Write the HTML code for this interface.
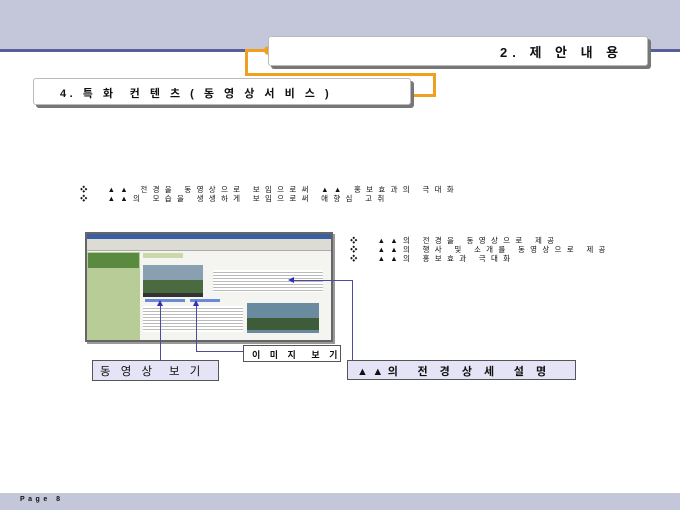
<!DOCTYPE html>
<html><head><meta charset="utf-8"><style>
*{margin:0;padding:0;box-sizing:border-box}
body{width:680px;height:510px;position:relative;background:#fff;overflow:hidden;font-family:"Liberation Sans","Noto Sans CJK KR",sans-serif;color:#111}
.a{position:absolute}
.bx{position:absolute;background:#fff;border:1px solid #bbb;border-radius:3px;box-shadow:3px 3px 0 #777}
.t{font-weight:bold;white-space:pre}
.sm{font-size:7.5px;letter-spacing:5.3px;white-space:pre;line-height:9px}
</style></head><body>
<div class="a" style="left:0;top:0;width:680px;height:50px;background:#c4c6da"></div>
<div class="a" style="left:0;top:49px;width:680px;height:3px;background:#5b5f99"></div>
<!-- orange connector -->
<div class="a" style="left:245px;top:49px;width:24px;height:3px;background:#f0a020"></div>
<div class="a" style="left:245px;top:49px;width:3px;height:27px;background:#f0a020"></div>
<div class="a" style="left:245px;top:73px;width:191px;height:3px;background:#f0a020"></div>
<div class="a" style="left:433px;top:73px;width:3px;height:24px;background:#f0a020"></div>
<div class="a" style="left:414px;top:94px;width:22px;height:3px;background:#f0a020"></div>
<div class="a" style="left:264px;top:46px;width:9px;height:9px;border-radius:50%;background:#f0a020"></div>
<div class="bx" style="left:268px;top:36px;width:380px;height:30px"></div>
<div class="a t" style="left:500px;top:42px;font-size:13px;letter-spacing:5px">2. 제 안 내 용</div>
<div class="bx" style="left:33px;top:78px;width:378px;height:27px"></div>
<div class="a t" style="left:60px;top:85px;font-size:11px;letter-spacing:3.5px">4. 특 화  컨 텐 츠 ( 동 영 상 서 비 스 )</div>

<div class="a sm" style="left:80px;top:185px">❖  ▲▲ 전경을 동영상으로 보임으로써 ▲▲ 홍보효과의 극대화
❖  ▲▲의 모습을 생생하게 보임으로써 애향심 고취</div>

<!-- screenshot -->
<div class="a" style="left:85px;top:232px;width:248px;height:110px;background:#f4f4f0;border:2px solid #666;box-shadow:2px 2px 0 #999"></div>
<div class="a" style="left:87px;top:234px;width:244px;height:5px;background:#3a5ea0"></div>
<div class="a" style="left:87px;top:239px;width:244px;height:12px;background:#dcdcd4;border-bottom:1px solid #aaa"></div>
<div class="a" style="left:87px;top:252px;width:53px;height:88px;background:#b8cc98"></div>
<div class="a" style="left:88px;top:253px;width:51px;height:15px;background:#5a8a40"></div>
<div class="a" style="left:143px;top:253px;width:40px;height:5px;background:#c8d8a8"></div>
<div class="a" style="left:143px;top:265px;width:60px;height:30px;background:#8aa0b0"></div>
<div class="a" style="left:143px;top:280px;width:60px;height:13px;background:#4a6a40"></div>
<div class="a" style="left:143px;top:293px;width:60px;height:4px;background:#333"></div>
<div class="a" style="left:213px;top:270px;width:110px;height:22px;background:repeating-linear-gradient(#fff 0 2px,#bbb 2px 3px)"></div>
<div class="a" style="left:145px;top:299px;width:40px;height:3px;background:#6a8ad8"></div>
<div class="a" style="left:190px;top:299px;width:30px;height:3px;background:#6a8ad8"></div>
<div class="a" style="left:143px;top:306px;width:100px;height:26px;background:repeating-linear-gradient(#fff 0 2px,#bbb 2px 3px)"></div>
<div class="a" style="left:247px;top:303px;width:72px;height:30px;background:#6a8aa0"></div>
<div class="a" style="left:247px;top:318px;width:72px;height:12px;background:#3e5c3a"></div>

<div class="a sm" style="left:350px;top:236px">❖  ▲▲의 전경을 동영상으로 제공
❖  ▲▲의 행사 및 소개를 동영상으로 제공
❖  ▲▲의 홍보효과 극대화</div>

<!-- pointer lines -->
<div class="a" style="left:292px;top:280px;width:61px;height:1px;background:#4a4aa0"></div>
<div class="a" style="left:352px;top:280px;width:1px;height:80px;background:#4a4aa0"></div>
<div class="a" style="left:288px;top:277px;border-right:6px solid #3030c0;border-top:3px solid transparent;border-bottom:3px solid transparent"></div>
<div class="a" style="left:160px;top:304px;width:1px;height:57px;background:#4a4aa0"></div>
<div class="a" style="left:157px;top:300px;border-bottom:6px solid #3030c0;border-left:3px solid transparent;border-right:3px solid transparent"></div>
<div class="a" style="left:196px;top:304px;width:1px;height:48px;background:#4a4aa0"></div>
<div class="a" style="left:196px;top:351px;width:48px;height:1px;background:#4a4aa0"></div>
<div class="a" style="left:193px;top:300px;border-bottom:6px solid #3030c0;border-left:3px solid transparent;border-right:3px solid transparent"></div>

<div class="a" style="left:243px;top:345px;width:98px;height:17px;background:#fff;border:1px solid #555"></div>
<div class="a t" style="left:252px;top:348px;font-size:9px;letter-spacing:3.5px">이 미 지  보 기</div>
<div class="a" style="left:92px;top:360px;width:127px;height:21px;background:#e4e4f6;border:1px solid #555"></div>
<div class="a" style="left:100px;top:363px;font-size:11.5px;letter-spacing:3.5px;white-space:pre">동 영 상  보 기</div>
<div class="a" style="left:347px;top:360px;width:229px;height:20px;background:#e4e4f6;border:1px solid #555"></div>
<div class="a t" style="left:357px;top:363px;font-size:11px;letter-spacing:4.5px">▲▲의  전 경 상 세  설 명</div>

<div class="a" style="left:0;top:493px;width:680px;height:17px;background:#c4c6da"></div>
<div class="a t" style="left:20px;top:496px;font-size:7px;letter-spacing:3.5px">Page 8</div>
</body></html>
